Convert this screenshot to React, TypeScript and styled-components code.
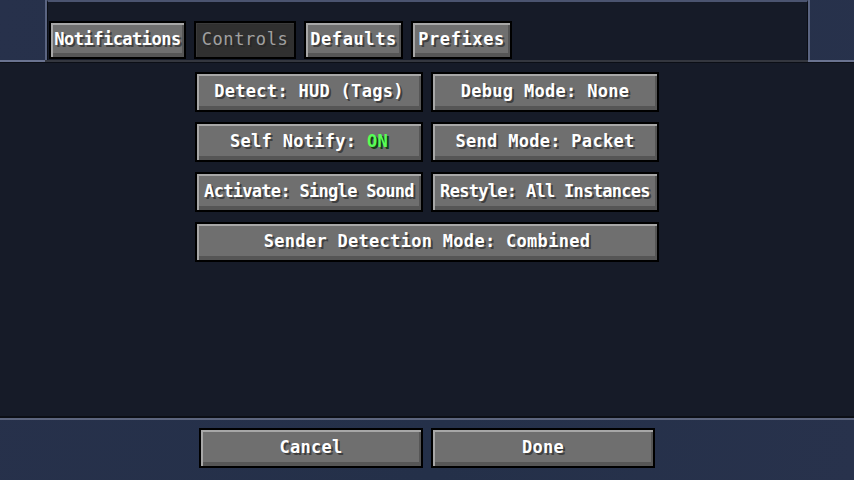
import React from 'react';
import styled, { createGlobalStyle, css } from 'styled-components';

const GlobalStyle = createGlobalStyle`
  html, body {
    margin: 0;
    padding: 0;
    width: 854px;
    height: 480px;
    overflow: hidden;
    background: #263049;
  }
  #root {
    height: 100%;
  }
`;

const Screen = styled.div`
  width: 854px;
  height: 480px;
  display: flex;
  flex-direction: column;
  background: linear-gradient(100deg, #27314b 0%, #243049 55%, #28324c 100%);
  font-family: 'DejaVu Sans Mono', 'Liberation Mono', monospace;
  font-weight: bold;
  font-size: 17px;
`;

const Header = styled.div`
  height: 60px;
  display: flex;
`;

const SidePanel = styled.div<{ $side: 'left' | 'right' }>`
  box-sizing: border-box;
  width: ${({ $side }) => ($side === 'left' ? 47 : 46)}px;
  ${({ $side }) =>
    $side === 'left'
      ? css`
          border-right: 2px solid #5a6481;
        `
      : css`
          border-left: 2px solid #5a6481;
        `}
`;

const TabBar = styled.div`
  flex: 1;
  box-sizing: border-box;
  background: #161b28;
  border-top: 2px solid #4b5470;
  border-left: 1px solid #0b0e15;
  border-right: 1px solid #0b0e15;
  display: flex;
  align-items: flex-start;
  gap: 8px;
  padding: 19px 0 0 1px;
`;

const HeaderLine = styled.div`
  height: 2px;
  display: flex;
  background: #6a7390;
`;

const HeaderLineMid = styled.div`
  margin: 0 46px 0 45px;
  flex: 1;
  background: #34373f;
`;

const Content = styled.div`
  flex: 1;
  background: #161b28;
  border-top: 1px solid #0c0f16;
  display: flex;
  justify-content: center;
  padding-top: 9px;
`;

const Grid = styled.div`
  display: grid;
  grid-template-columns: 228px 228px;
  grid-auto-rows: 40px;
  column-gap: 8px;
  row-gap: 10px;
  align-content: start;
`;

const FooterLine = styled.div`
  height: 4px;
  background: #0c0f16;
  border-bottom: 2px solid #5d667f;
  box-sizing: border-box;
`;

const Footer = styled.div`
  height: 60px;
  display: flex;
  justify-content: center;
  gap: 8px;
  padding-top: 8px;
  box-sizing: border-box;
`;

const buttonFace = css`
  box-sizing: border-box;
  height: 40px;
  border: 2px solid #000;
  background: #6f6f6f;
  box-shadow: inset 2px 2px 0 #a7a7a7, inset -2px -4px 0 #565656;
  color: #ffffff;
  text-shadow: 2px 2px 0 #3f3f3f;
`;

const Button = styled.div<{ $span?: boolean; $width?: number; $tight?: boolean }>`
  ${buttonFace};
  ${({ $width }) => $width && `width: ${$width}px;`}
  ${({ $span }) => $span && 'grid-column: 1 / span 2;'}
  display: flex;
  align-items: center;
  justify-content: center;
  padding-bottom: 2px;
  white-space: nowrap;
  letter-spacing: ${({ $tight }) => ($tight ? '-0.7px' : '0.3px')};
`;

const Tab = styled.div<{ $active?: boolean; $w: number }>`
  ${buttonFace};
  width: ${({ $w }) => $w}px;
  height: 38px;
  padding-bottom: 2px;
  display: flex;
  align-items: center;
  justify-content: center;
  white-space: nowrap;
  letter-spacing: ${({ $w }) => ($w > 120 ? '-0.5px' : '0.6px')};
  ${({ $active }) =>
    $active &&
    css`
      background: #303030;
      box-shadow: inset 1px 1px 0 #3a3a3a;
      color: #a0a0a0;
      text-shadow: 2px 2px 0 #282828;
      font-weight: normal;
    `}
`;

const On = styled.span`
  color: #55ff55;
  text-shadow: 2px 2px 0 #153f15;
`;

const App: React.FC = () => {
  return (
    <>
      <GlobalStyle />
      <Screen>
        <Header>
          <SidePanel $side="left" />
          <TabBar>
            <Tab $w={137}>Notifications</Tab>
            <Tab $w={102} $active>
              Controls
            </Tab>
            <Tab $w={99}>Defaults</Tab>
            <Tab $w={101}>Prefixes</Tab>
          </TabBar>
          <SidePanel $side="right" />
        </Header>
        <HeaderLine>
          <HeaderLineMid />
        </HeaderLine>
        <Content>
          <Grid>
            <Button>Detect: HUD (Tags)</Button>
            <Button>Debug Mode: None</Button>
            <Button>
              Self Notify:&nbsp;<On>ON</On>
            </Button>
            <Button>Send Mode: Packet</Button>
            <Button $tight>Activate: Single Sound</Button>
            <Button $tight>Restyle: All Instances</Button>
            <Button $span>Sender Detection Mode: Combined</Button>
          </Grid>
        </Content>
        <FooterLine />
        <Footer>
          <Button $width={224}>Cancel</Button>
          <Button $width={224}>Done</Button>
        </Footer>
      </Screen>
    </>
  );
};

export default App;
